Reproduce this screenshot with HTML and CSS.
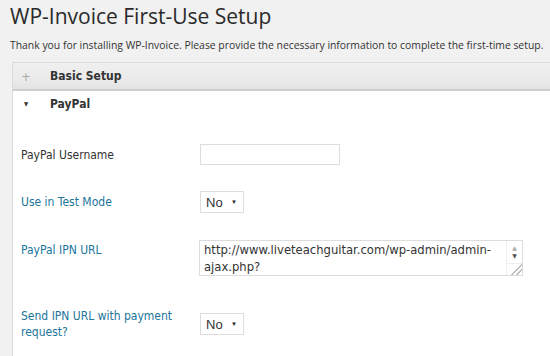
FILE: index.html
```html
<!DOCTYPE html>
<html lang="en">
<head>
  <meta charset="UTF-8">
  <title>WP-Invoice First-Use Setup</title>
  <link rel="stylesheet" href="styles.css">
</head>
<body>
  <div class="wrap">
    <h1>WP-Invoice First-Use Setup</h1>
    <p class="intro">Thank you for installing WP-Invoice. Please provide the necessary information to complete the first-time setup.</p>

    <div class="section collapsed">
      <div class="section-head"><span class="toggle">+</span><span class="section-title">Basic Setup</span></div>
    </div>

    <div class="section open">
      <div class="section-head"><span class="toggle arrow">&#9660;</span><span class="section-title">PayPal</span></div>
      <div class="section-body">
        <div class="row">
          <label class="field-label" for="pp-user">PayPal Username</label>
          <input type="text" id="pp-user" class="text-input">
        </div>
        <div class="row row-gap">
          <span class="field-label link">Use in Test Mode</span>
          <div class="select-box"><span>No</span><span class="caret">&#9660;</span></div>
        </div>
        <div class="row row-top">
          <span class="field-label link">PayPal IPN URL</span>
          <div class="textarea-box">
            <div class="textarea-text">http://www.liveteachguitar.com/wp-admin/admin-ajax.php?</div>
            <div class="scroll">
              <span class="up">&#9650;</span>
              <span class="down">&#9660;</span>
              <span class="grip"></span>
            </div>
          </div>
        </div>
        <div class="row">
          <span class="field-label link">Send IPN URL with payment request?</span>
          <div class="select-box"><span>No</span><span class="caret">&#9660;</span></div>
        </div>
      </div>
    </div>
  </div>
</body>
</html>
```

FILE: styles.css
```css
body {
  margin: 0;
  background-color: #f1f1f1;
  font-family: "DejaVu Sans", Verdana, sans-serif;
  color: #333;
  overflow: hidden;
}
.wrap {
  padding: 2px 0 0 12px;
}
h1 {
  font-family: "Open Sans", sans-serif;
  font-weight: 400;
  font-size: 21px;
  color: #2a2a2a;
  margin: 0 0 0 -2px;
  line-height: 28px;
}
.intro {
  font-family: "Open Sans", sans-serif;
  font-size: 10.4px;
  color: #333;
  margin: 7px 0 0 -2px;
  line-height: 16px;
  white-space: nowrap;
}
.section {
  margin-top: 9px;
}
.section + .section {
  margin-top: 0;
}
.section-head {
  display: flex;
  align-items: center;
  padding-left: 8px;
  font-family: "DejaVu Sans Condensed", "DejaVu Sans", Verdana, sans-serif;
  font-stretch: condensed;
  font-weight: bold;
  font-size: 12px;
  color: #333;
}
.collapsed .section-head {
  height: 26px;
  border-top: 1px solid #dcdcdc;
  border-left: 1px solid #dcdcdc;
  border-bottom: 2px solid #cfcfcf;
  background: linear-gradient(#efefef, #ebebeb 60%, #e3e3e3);
}
.toggle {
  width: 10px;
  margin-right: 19px;
  text-align: center;
  font-weight: normal;
  color: #aaa;
  font-size: 13px;
}
.arrow {
  color: #333;
  font-size: 6px;
}
.open {
  background: #fff;
  border-left: 1px solid #dcdcdc;
  height: 265px;
}
.open .section-head {
  height: 25px;
}
.section-body {
  padding: 28px 0 0 8px;
}
.row {
  display: flex;
  align-items: center;
  margin-bottom: 26px;
}
.row-gap {
  margin-bottom: 27px;
}
.row-top {
  align-items: flex-start;
  margin-bottom: 32px;
}
.row-top .field-label {
  padding-top: 2px;
}
.field-label {
  width: 179px;
  font-family: "DejaVu Sans Condensed", "DejaVu Sans", Verdana, sans-serif;
  font-stretch: condensed;
  font-size: 12px;
  line-height: 16px;
  color: #333;
}
.link {
  color: #21759b;
}
.text-input {
  width: 140px;
  height: 21px;
  box-sizing: border-box;
  border: 1px solid #ddd;
  margin: 0;
  padding: 0;
  background: #fff;
}
.select-box {
  width: 44px;
  height: 22px;
  box-sizing: border-box;
  border: 1px solid #ddd;
  display: flex;
  align-items: center;
  justify-content: space-between;
  padding: 0 6px 0 5px;
  font-family: "Liberation Sans", Arial, sans-serif;
  font-size: 13px;
  color: #333;
  background: #fff;
}
.caret {
  font-size: 6px;
  color: #222;
}
.textarea-box {
  width: 324px;
  height: 36px;
  box-sizing: border-box;
  border: 1px solid #ddd;
  display: flex;
  margin-left: -1px;
  background: #fff;
}
.textarea-text {
  flex: 1;
  font-size: 11.6px;
  line-height: 17px;
  padding: 1px 0 0 4px;
  color: #333;
}
.scroll {
  width: 15px;
  border-left: 1px solid #eee;
  display: flex;
  flex-direction: column;
  align-items: center;
  font-size: 6px;
  color: #aaa;
}
.up {
  margin-top: 3px;
}
.down {
  color: #555;
  margin-top: 1px;
}
.grip {
  margin-top: auto;
  width: 15px;
  height: 11px;
  border-top: 1px solid #eee;
  background: linear-gradient(135deg, transparent 55%, #bbb 56%, #bbb 62%, transparent 63%, transparent 75%, #bbb 76%, #bbb 82%, transparent 83%);
}
```
